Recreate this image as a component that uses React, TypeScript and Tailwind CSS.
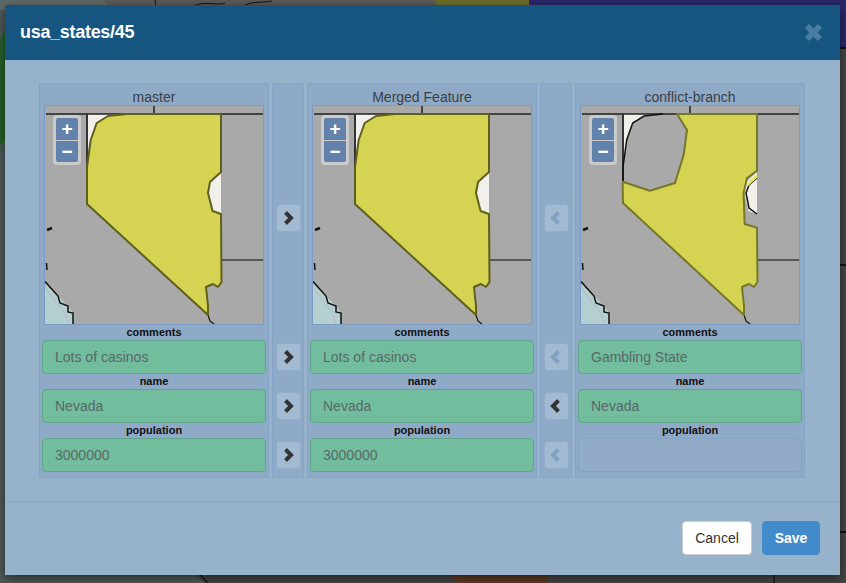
type Field = {
  label: string;
  value: string;
};

type Side = "left" | "right";

const MASTER: Field[] = [
  { label: "comments", value: "Lots of casinos" },
  { label: "name", value: "Nevada" },
  { label: "population", value: "3000000" },
];

const CONFLICT: Field[] = [
  { label: "comments", value: "Gambling State" },
  { label: "name", value: "Nevada" },
  { label: "population", value: "" },
];

const NEVADA =
  "M42 98 L42 61 L45.7 34 L51.7 17 L63 10 L82 8 L176 8 L176 66 L165 76 L163 87 L167.6 105 L176 108 L176.5 176 L173 181 L168 178 L161 181 L163 200 L163 209 Z";

const NEVADA_CUT =
  "M96 8 L176 8 L176 64.7 L166 72 L162.6 87 L163.6 118 L176 121.7 L176.5 176 L173 181 L168 178 L161 181 L163 200 L163 209 L42 97 L41.6 75.7 L69 84.7 L94 77 L102.6 49 L106 24 Z";

function BaseMap() {
  return (
    <>
      <rect width="218" height="218" fill="#a9a9a9" />
      <path d="M42 8 L82 8 L63 10 L51.7 17 L45.7 34 L42 61 Z" fill="#f2f0eb" />
      <path d="M176 66 L165 76 L163 87 L167.6 105 L176 108 Z" fill="#f2f0eb" />
      <path d="M0 175.6 L13 190 L23 200 L28 207 L28 218 L0 218 Z" fill="#b5d0d0" />
      <path d="M0 181 L10 195 L20 207 L23 218" fill="none" stroke="#b9b5cf" strokeWidth="1" />
      <path d="M0 175.6 L13 190 L15 197 L23 200 L23 206 L28 207 L28 218" fill="none" stroke="#111" strokeWidth="1.5" />
      <path d="M1 8 L218 8 M109 0 L109 8" fill="none" stroke="#222" strokeWidth="1.5" />
      <path d="M42 8 L42 98" fill="none" stroke="#333" strokeWidth="2" />
      <path d="M176 154 L218 154" fill="none" stroke="#3d3d3d" strokeWidth="1.5" />
      <path d="M2 124 L7 122" fill="none" stroke="#111" strokeWidth="2.5" />
      <path d="M1.5 157 L2 164" fill="none" stroke="#111" strokeWidth="1.5" />
      <path d="M163 209 L165 215 L169 218" fill="none" stroke="#111" strokeWidth="1.2" />
    </>
  );
}

function StateMap({ cut = false }: { cut?: boolean }) {
  return (
    <div className="relative h-[220px] w-[220px] border border-[#7c9dc3]">
      <svg viewBox="0 0 218 218" className="block h-[218px] w-[218px]">
        <BaseMap />
        {cut ? (
          <>
            <path d="M42 76 L42 61 L45.7 34 L51.7 17 L63 10 L82 8" fill="none" stroke="#111" strokeWidth="1.5" />
            <path d="M176 72 L168 79 L165 87 L168 102 L176 108" fill="none" stroke="#111" strokeWidth="1.5" />
            <path d={NEVADA_CUT} fill="#d4d452" stroke="#77772a" strokeWidth="2" strokeLinejoin="round" />
            <path d="M176 68 L168 75 L166 81 L176 72 Z" fill="#e6e46a" />
          </>
        ) : (
          <path d={NEVADA} fill="#d4d452" stroke="#5f5f1e" strokeWidth="2" strokeLinejoin="round" />
        )}
      </svg>
      <div className="absolute left-[8px] top-[9px] flex h-[50px] w-[28px] flex-col rounded-[4px] bg-white/40 p-[3px]">
        <div className="flex h-[22px] items-center justify-center rounded-t-[2px] bg-[#6282ab] text-[19px] font-bold leading-[20px] text-white">
          +
        </div>
        <div className="mt-[1px] flex h-[21px] items-center justify-center rounded-b-[2px] bg-[#6282ab] text-[19px] font-bold leading-[20px] text-white">
          −
        </div>
      </div>
    </div>
  );
}

function FieldColumn({ title, fields, cut }: { title: string; fields: Field[]; cut?: boolean }) {
  return (
    <div className="flex h-[395px] w-[230px] flex-col items-center border border-[#86a5c6] bg-[#8faac6]">
      <div className="h-[21px] w-full pt-[5px] text-center text-[14px] leading-[17px] text-[#3a3f44]">{title}</div>
      <StateMap cut={cut} />
      {fields.map((field) => (
        <div key={field.label} className="w-[224px]">
          <div className="h-[15px] text-center text-[11px] font-bold leading-[14px] text-[#111]">{field.label}</div>
          <div
            className={
              field.value
                ? "h-[34px] rounded-[4px] border border-[#5ea78c] bg-[#72bd9d] px-[12px] text-[14px] leading-[32px] text-[#56696a]"
                : "h-[34px] rounded-[4px] border border-[#86a3c2] bg-[#92abc7]"
            }
          >
            {field.value}
          </div>
        </div>
      ))}
    </div>
  );
}

function ArrowButton({ side, active, className }: { side: Side; active: boolean; className: string }) {
  const color = active ? "text-[#333]" : "text-[#82a2c3]";
  return (
    <div
      className={`flex h-[28px] w-[25px] items-center justify-center rounded-[4px] border border-[#93aecb] bg-[#a3bad3] ${className}`}
    >
      <svg viewBox="0 0 12 14" className={`h-[14px] w-[12px] ${color}`}>
        <path
          d={side === "right" ? "M3.5 1.5 L9 7 L3.5 12.5" : "M8.5 1.5 L3 7 L8.5 12.5"}
          fill="none"
          stroke="currentColor"
          strokeWidth="4"
        />
      </svg>
    </div>
  );
}

function ArrowColumn({ side, enabled }: { side: Side; enabled: boolean[] }) {
  return (
    <div className="flex h-[395px] w-[32px] flex-col items-center border border-[#86a5c6] bg-[#8faac6]">
      <ArrowButton side={side} active={enabled[0]} className="mt-[120px]" />
      <ArrowButton side={side} active={enabled[1]} className="mt-[111px]" />
      <ArrowButton side={side} active={enabled[2]} className="mt-[21px]" />
      <ArrowButton side={side} active={enabled[3]} className="mt-[21px]" />
    </div>
  );
}

function BackgroundMap() {
  return (
    <svg viewBox="0 0 846 583" className="absolute inset-0 h-[583px] w-[846px]">
      <rect width="846" height="583" fill="#454545" />
      <path d="M0 0 L846 0 L846 20 L0 20 Z" fill="#5a5a5a" />
      <path d="M0 0 L103 0 L110 20 L190 570 L205 583 L0 583 Z" fill="#4d5857" />
      <path d="M0 0 L103 0 L110 10 L0 10 Z" fill="#5e6a68" />
      <path d="M0 40 L6 28 L6 140 L0 146 Z" fill="#256028" />
      <path d="M434 0 L529 0 L529 10 L440 10 Z" fill="#6f6c28" />
      <path d="M529 0 L846 0 L846 48 L529 48 Z" fill="#2b2668" />
      <path d="M846 48 L836 48" stroke="#111" strokeWidth="2" />
      <path d="M846 265 L836 265 M846 532 L836 532" stroke="#111" strokeWidth="2" />
      <path d="M155 0 L156 8 M195 5 C210 1 218 6 225 3 M245 5 C255 1 262 3 272 1" fill="none" stroke="#111" strokeWidth="1" />
      <path d="M200 575 L208 583 M774 575 L774 583" fill="none" stroke="#111" strokeWidth="1.2" />
      <path d="M450 575 L550 575 L545 583 L458 583 Z" fill="#5f3a22" />
    </svg>
  );
}

export default function App() {
  return (
    <div className="relative h-[583px] w-[846px] overflow-hidden font-['Liberation_Sans',Arial,sans-serif]">
      <BackgroundMap />
      <div className="absolute left-[5px] top-[5px] flex h-[570px] w-[835px] flex-col bg-[#97b2cb] shadow-[0_3px_9px_rgba(0,0,0,0.5)]">
        <div className="flex h-[55px] shrink-0 items-center justify-between bg-[#15557f] pl-[15px] pr-[17px]">
          <h4 className="text-[18px] font-bold tracking-[-0.3px] text-white">usa_states/45</h4>
          <svg viewBox="0 0 19 19" className="mb-[1px] h-[19px] w-[19px] text-[#4a7ca1]">
            <path d="M3 3 L16 16 M16 3 L3 16" fill="none" stroke="currentColor" strokeWidth="6" />
          </svg>
        </div>
        <div className="flex h-[442px] shrink-0 justify-between border-b border-[#87a5c4] pl-[34px] pr-[35px] pt-[23px]">
          <FieldColumn title="master" fields={MASTER} />
          <ArrowColumn side="right" enabled={[true, true, true, true]} />
          <FieldColumn title="Merged Feature" fields={MASTER} />
          <ArrowColumn side="left" enabled={[false, false, true, false]} />
          <FieldColumn title="conflict-branch" fields={CONFLICT} cut />
        </div>
        <div className="flex flex-1 items-start justify-end gap-[10px] pr-[20px] pt-[19px]">
          <button className="h-[34px] w-[70px] rounded-[4px] border border-[#ccc] bg-white text-[14px] text-[#333]">
            Cancel
          </button>
          <button className="h-[34px] w-[58px] rounded-[4px] border border-[#428bca] bg-[#428bca] text-[14px] font-bold text-white">
            Save
          </button>
        </div>
      </div>
    </div>
  );
}
